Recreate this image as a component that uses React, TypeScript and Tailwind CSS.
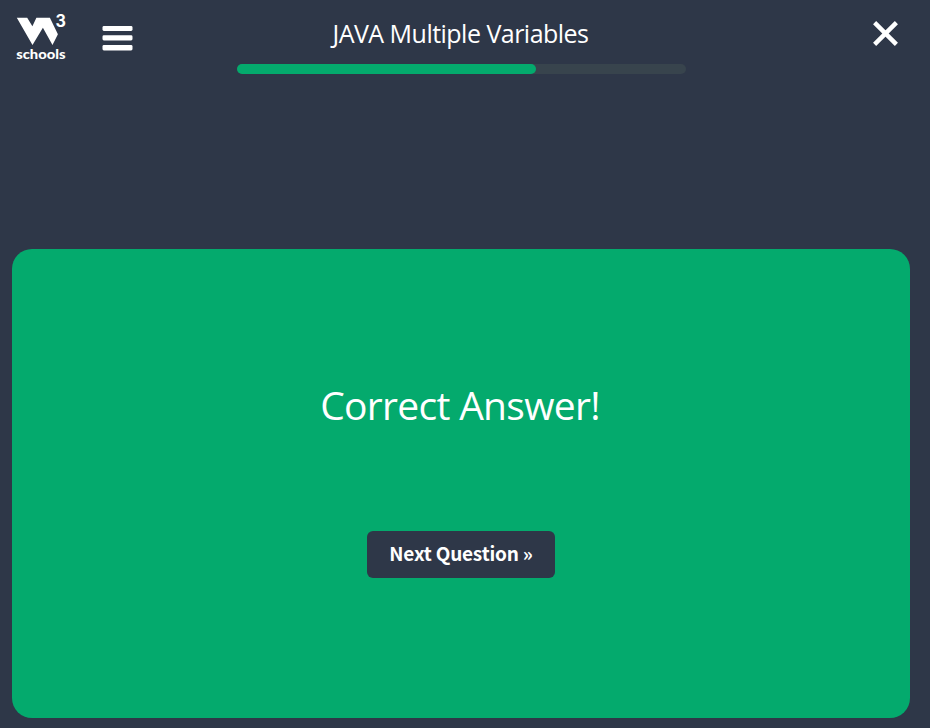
const segoe = 'font-["Open_Sans","Noto_Sans",sans-serif]';

function Logo() {
  return (
    <svg width="60" height="56" viewBox="14 8 60 56" className="block overflow-visible" role="img" aria-label="W3Schools">
      <path
        d="M16.8 17.8h10.4l5.2 8.4 4-8.4h13.5l8 16.5-5.4 10.6-9.6-17.2-10.4 17.2z"
        fill="#fff"
      />
      <text x="55.4" y="26.6" fill="#fff" textLength="10.4" lengthAdjust="spacingAndGlyphs" className='font-["Inter",sans-serif] text-[17px] font-bold'>3</text>
      <text x="16.2" y="59" fill="#fff" textLength="49.4" lengthAdjust="spacingAndGlyphs" className='font-["Lato",sans-serif] text-[13.5px] font-black'>schools</text>
    </svg>
  );
}

export default function App() {
  return (
    <div className={`flex h-[728px] w-[930px] flex-col overflow-hidden bg-[#2e3748] text-white ${segoe}`}>
      <header className="flex h-[249px] shrink-0 items-start">
        <div className="ml-[14px] mt-2"><Logo /></div>
        <button className="ml-7 mt-[26px] block" aria-label="Menu">
          <svg width="31" height="25" viewBox="0 0 31 25" fill="#fff">
            <rect x="0.5" y="0" width="30" height="5" rx="1.4" />
            <rect x="0.5" y="9.3" width="30" height="5.2" rx="1.4" />
            <rect x="0.5" y="19" width="30" height="5.4" rx="1.4" />
          </svg>
        </button>
        <div className="ml-[104px] flex w-[449px] flex-col items-center">
          <h1 className="mt-[15px] h-[49px] whitespace-nowrap pr-[2px] text-[25px] leading-9 tracking-[-0.52px]">JAVA Multiple Variables</h1>
          <div className="h-[10px] w-full rounded-full bg-[#38444d]">
            <div className="h-full w-[299px] rounded-full bg-[#04aa6d]" />
          </div>
        </div>
        <button className="ml-[187px] mt-[21px] block" aria-label="Close">
          <svg width="25" height="25" viewBox="0 0 25 25" fill="none" stroke="#fff" strokeWidth="4.4">
            <path d="M1.6 1.6 23.4 23.4M23.4 1.6 1.6 23.4" />
          </svg>
        </button>
      </header>
      <main className="ml-3 flex h-[469px] w-[898px] shrink-0 flex-col items-center rounded-[20px] bg-[#04aa6d]">
        <h2 className="mt-[126px] whitespace-nowrap pr-[2px] text-[39px] leading-[60px] tracking-[-0.7px]">Correct Answer!</h2>
        <button className='mt-[96px] h-[47px] w-[188px] rounded-[6px] bg-[#2e3748] pb-[3px] font-["Noto_Sans_CJK_SC",sans-serif] text-[19px] font-bold leading-[44px] tracking-[-0.2px]'>
          Next Question »
        </button>
      </main>
    </div>
  );
}
